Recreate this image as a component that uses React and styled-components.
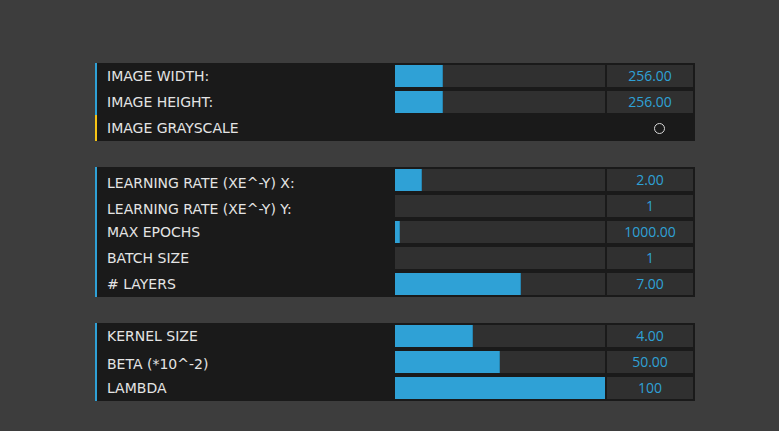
import React from "react"
import styled, { createGlobalStyle } from "styled-components"

const GlobalStyle = createGlobalStyle`
  html, body {
    margin: 0;
    padding: 0;
    background: #3d3d3d;
  }
  body {
    font-family: "DejaVu Sans", Verdana, sans-serif;
  }
`

const Page = styled.div`
  min-height: 431px;
  padding: 63px 0 0 95px;
  box-sizing: border-box;
  display: flex;
  flex-direction: column;
  gap: 26px;
`

const Panel = styled.section`
  width: 600px;
  background: #1a1a1a;
  display: flex;
  flex-direction: column;
`

const Row = styled.div`
  height: 26px;
  box-sizing: border-box;
  border-left: 2px solid ${props => props.$accent || "#2fa1d6"};
  display: grid;
  grid-template-columns: 1fr 210px 86px;
  column-gap: 2px;
  align-items: center;
  padding-right: 2px;
`

const Label = styled.div`
  padding-left: 10px;
  padding-top: ${props => props.$drop || 0}px;
  color: #e4e4e4;
  font-size: 14px;
  text-transform: uppercase;
  white-space: nowrap;
  line-height: 26px;
  height: 26px;
  box-sizing: border-box;
`

const Track = styled.div`
  height: 22px;
  background: #303030;
  overflow: hidden;
`

const Fill = styled.div`
  height: 100%;
  width: ${props => props.$pct}%;
  background: #2fa1d6;
  box-sizing: border-box;
  border-right: ${props => (props.$pct > 0 && props.$pct < 100 ? "1px solid #2785b0" : "none")};
`

const NumberBox = styled.div`
  height: 22px;
  background: #303030;
  color: #2fa1d6;
  font-family: "Open Sans", "Noto Sans", sans-serif;
  font-size: 14px;
  line-height: 22px;
  text-align: center;
`

const CheckCell = styled.div`
  grid-column: 2 / 4;
  display: flex;
  justify-content: flex-end;
  padding-right: 28px;
`

const Check = styled.span`
  width: 9px;
  height: 9px;
  border: 1px solid #d8d8d8;
  border-radius: 50%;
  box-sizing: content-box;
`

const groups = [
  [
    { label: "Image width:", pct: 22.9, value: "256.00" },
    { label: "Image height:", pct: 22.9, value: "256.00" },
    { label: "Image grayscale", bool: true }
  ],
  [
    { label: "Learning rate (xe^-y) x:", pct: 12.9, value: "2.00", drop: 3 },
    { label: "Learning rate (xe^-y) y:", pct: 0, value: "1", drop: 3 },
    { label: "Max epochs", pct: 2.4, value: "1000.00" },
    { label: "Batch size", pct: 0, value: "1" },
    { label: "# layers", pct: 60, value: "7.00" }
  ],
  [
    { label: "Kernel size", pct: 37.1, value: "4.00" },
    { label: "Beta (*10^-2)", pct: 50, value: "50.00", drop: 2 },
    { label: "Lambda", pct: 100, value: "100" }
  ]
]

export default function App() {
  return (
    <>
      <GlobalStyle />
      <Page>
        {groups.map((rows, i) => (
          <Panel key={i}>
            {rows.map(row => (
              <Row key={row.label} $accent={row.bool ? "#f7c415" : undefined}>
                <Label $drop={row.drop}>{row.label}</Label>
                {row.bool ? (
                  <CheckCell>
                    <Check />
                  </CheckCell>
                ) : (
                  <>
                    <Track>
                      <Fill $pct={row.pct} />
                    </Track>
                    <NumberBox>{row.value}</NumberBox>
                  </>
                )}
              </Row>
            ))}
          </Panel>
        ))}
      </Page>
    </>
  )
}
